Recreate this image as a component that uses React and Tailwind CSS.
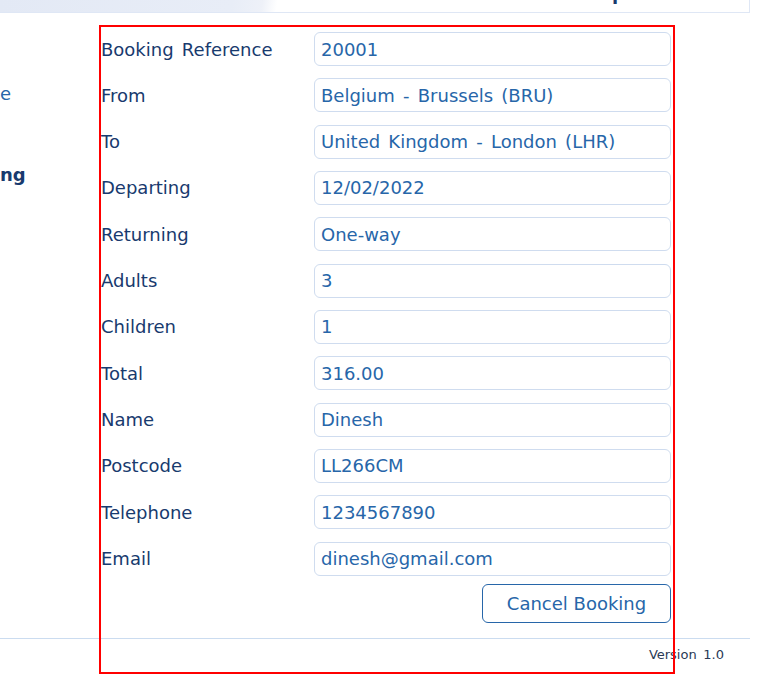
const rows = [
  ['Booking Reference', '20001'],
  ['From', 'Belgium - Brussels (BRU)'],
  ['To', 'United Kingdom - London (LHR)'],
  ['Departing', '12/02/2022'],
  ['Returning', 'One-way'],
  ['Adults', '3'],
  ['Children', '1'],
  ['Total', '316.00'],
  ['Name', 'Dinesh'],
  ['Postcode', 'LL266CM'],
  ['Telephone', '1234567890'],
  ['Email', 'dinesh@gmail.com'],
];

export default function App() {
  return (
    <div className="relative min-h-[698px] bg-white font-['DejaVu_Sans',sans-serif] text-[18px] [word-spacing:2.5px]">
      {/* top bar, mostly scrolled out of view */}
      <div className="h-[13px] w-[750px] overflow-hidden border-b border-r border-[#dfe7f5] bg-[linear-gradient(100deg,#e3e9f5_0%,#e8edf7_31%,#eef1f8_35%,#ffffff_37%)]">
        <div className="-mt-[17px] pl-[612px] font-bold leading-[21px] text-[#183a6e]">p</div>
      </div>

      <div className="flex">
        <div className="w-[101px] shrink-0 pt-[70px]">
          <div className="leading-[21px] text-[#2766a9]">e</div>
          <div className="mt-[60px] font-bold leading-[21px] text-[#183a6e]">ng</div>
        </div>

        <div className="w-[570px] pt-[19px]">
          <div className="flex flex-col gap-[12.33px]">
            {rows.map(([label, value]) => (
              <div key={label} className="flex items-center">
                <div className="w-[213px] shrink-0 text-[#183a6e]">{label}</div>
                <div className="flex h-[34px] flex-1 items-center rounded-[6px] border border-[#cfdcef] px-[6px] text-[#2766a9]">
                  {value}
                </div>
              </div>
            ))}
          </div>
          <div className="mt-[8px] flex justify-end">
            <button className="h-[39px] w-[189px] rounded-[6px] border border-[#2766a9] text-[18px] text-[#2766a9]">
              Cancel Booking
            </button>
          </div>
        </div>
      </div>

      <div className="mt-[15px] w-[750px] border-t border-[#cbdcf0] pr-[26px] pt-[6px] text-right text-[13px] text-[#2a3a55]">
        Version 1.0
      </div>

      {/* annotation outline */}
      <div className="pointer-events-none absolute left-[99px] top-[25px] h-[649px] w-[576px] border-2 border-[#ff0000]" />
    </div>
  );
}
